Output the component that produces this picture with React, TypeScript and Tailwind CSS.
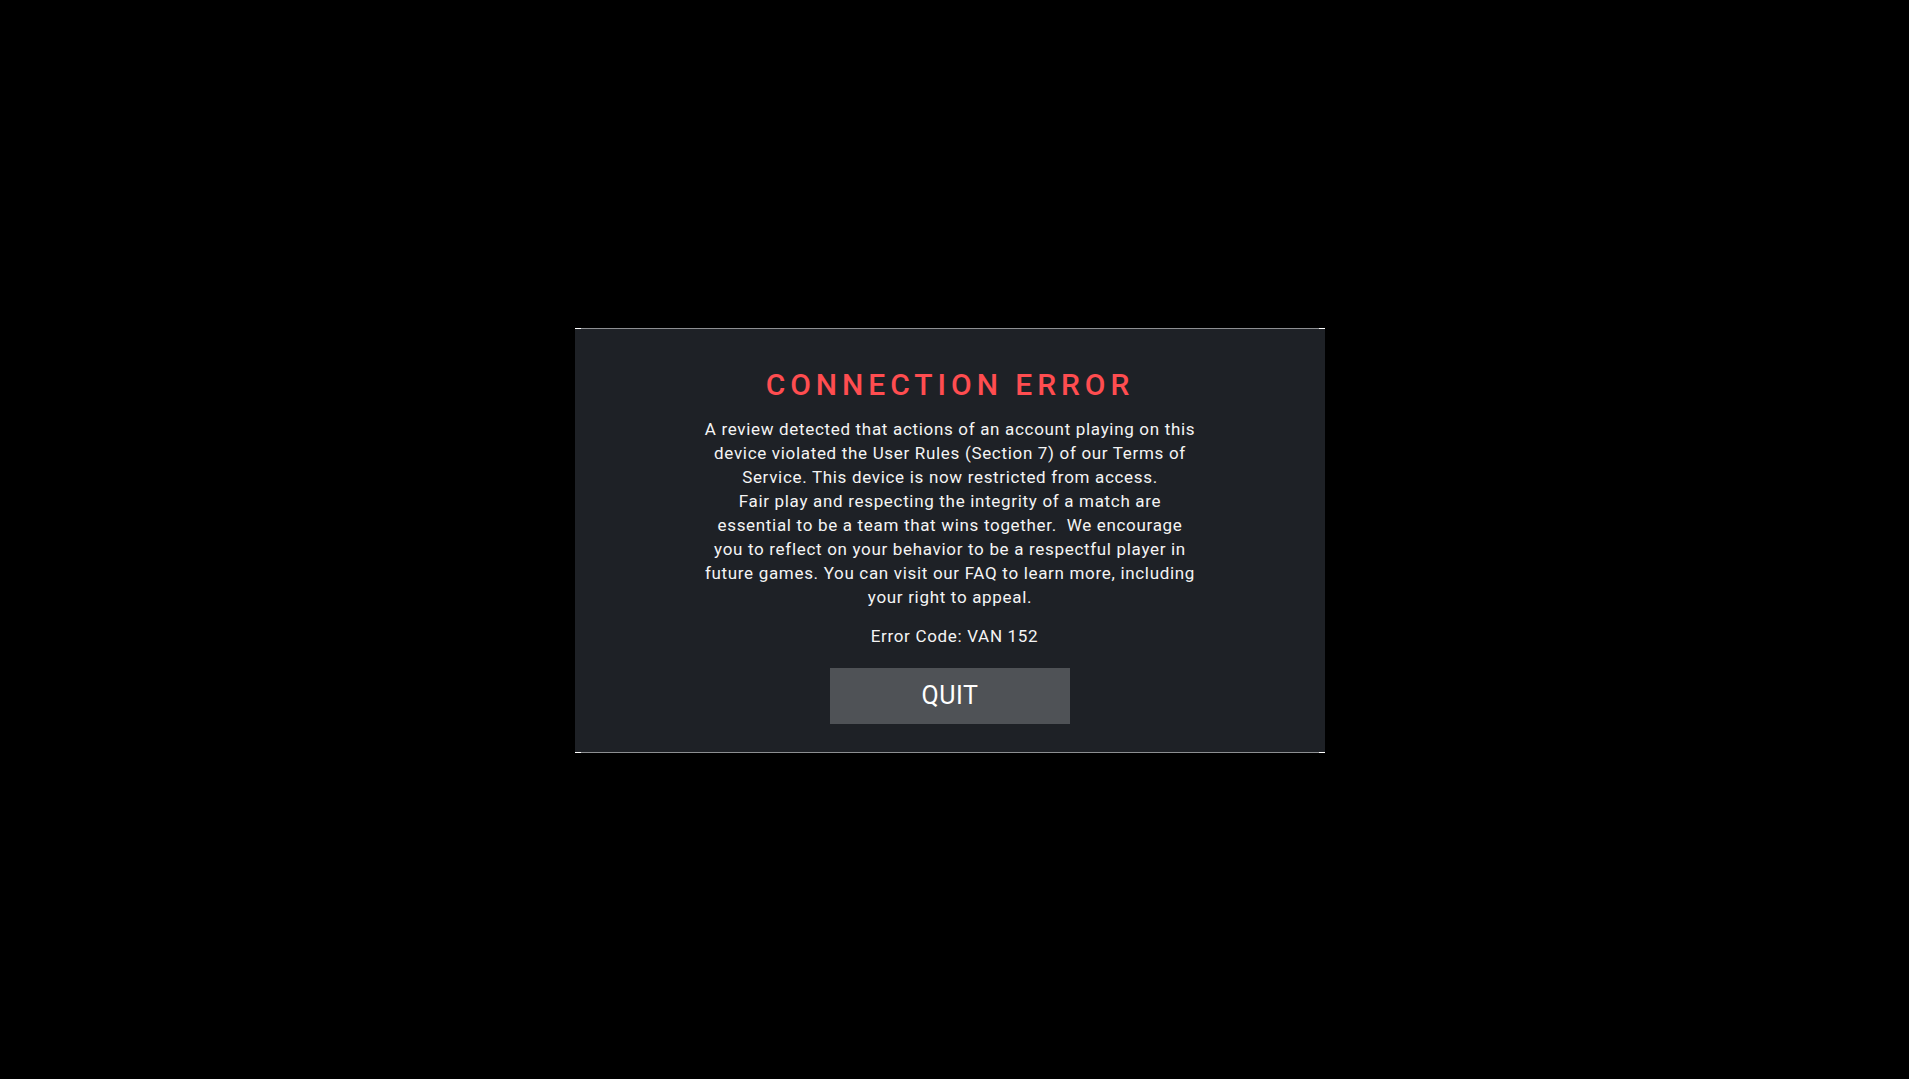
const lines = [
  "A review detected that actions of an account playing on this",
  "device violated the User Rules (Section 7) of our Terms of",
  "Service. This device is now restricted from access.",
  "Fair play and respecting the integrity of a match are",
  "essential to be a team that wins together.\u00a0 We encourage",
  "you to reflect on your behavior to be a respectful player in",
  "future games. You can visit our FAQ to learn more, including",
  "your right to appeal.",
];

export default function App() {
  return (
    <div className="flex h-screen w-full items-center justify-center bg-black pt-[2px] pr-[9px] font-['Roboto',sans-serif]">
      <div className="relative flex h-[425px] w-[750px] flex-col items-center border-y border-[#8d8f92] bg-[#1e2126]">
        <span className="absolute -top-px left-0 h-px w-[6px] bg-white" />
        <span className="absolute -top-px right-0 h-px w-[6px] bg-white" />
        <span className="absolute -bottom-px left-0 h-px w-[6px] bg-white" />
        <span className="absolute -bottom-px right-0 h-px w-[6px] bg-white" />

        <h1 className="mt-[38px] text-[30px] leading-[36px] font-medium tracking-[0.165em] text-[#ff4d50]">
          CONNECTION ERROR
        </h1>

        <div className="mt-[14px] text-center text-[17px] leading-[24px] tracking-[0.04em] text-[#f4f4f4]">
          {lines.map((l) => (
            <p key={l} className="whitespace-nowrap">
              {l}
            </p>
          ))}
        </div>

        <p className="mt-[15px] ml-[9px] text-[17px] leading-[24px] tracking-[0.04em] text-[#f4f4f4]">
          Error Code: VAN 152
        </p>

        <button className="mt-[20px] flex h-[56px] w-[240px] items-center justify-center bg-[#4f5256] text-[25px] tracking-[0.02em] text-white">
          QUIT
        </button>
      </div>
    </div>
  );
}
